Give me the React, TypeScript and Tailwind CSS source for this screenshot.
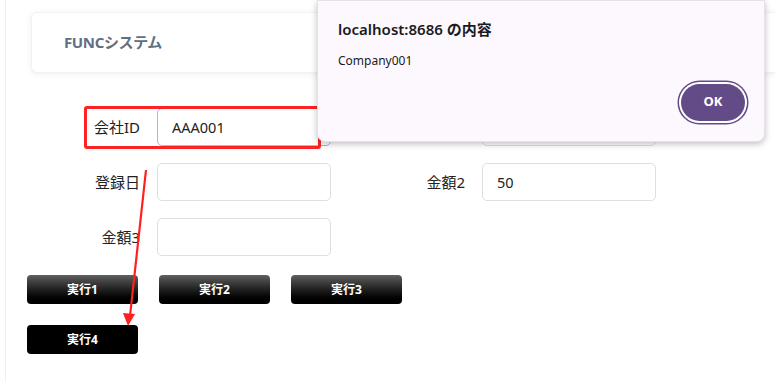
import { useState } from 'react';

const fields = [
    { label: '会社ID', value: 'AAA001', focus: true },
    { label: '金額1', value: '' },
    { label: '登録日', value: '' },
    { label: '金額2', value: '50' },
    { label: '金額3', value: '' },
];

export default function App() {

    const [values, setValues] = useState(fields.map((f) => f.value));

    return (
        <div className="relative w-[775px] h-[382px] overflow-hidden bg-white" style={{ fontFamily: '"Noto Sans", "Noto Sans CJK JP", sans-serif' }}>
            <div className="ml-[5px] h-full border-l border-[#f0f0f2] pl-[25px] pt-3">
                {/* header */}
                <div className="h-[61px] w-[760px] rounded-md bg-white shadow-[0_1px_6px_rgba(0,0,0,0.07)] border border-[#f1f2f4] flex items-center pl-8">
                    <span className="text-[15px] font-bold text-[#5f6f84] tracking-tight">FUNCシステム</span>
                </div>

                {/* form */}
                <div className="grid grid-cols-[311px_311px] gap-x-[14px] gap-y-[17px] mt-[35px] -ml-[11px]">
                    {fields.map((f, i) => (
                        <div key={i} className="flex items-center gap-[17px]">
                            <label className="w-[120px] text-right text-[15px] text-[#222]">{f.label}</label>
                            <input
                                className={`w-[174px] h-[38px] rounded-[5px] border bg-white px-[14px] text-[14.5px] text-[#222] outline-none ${f.focus ? 'border-[#a9b3f5]' : 'border-[#dcdfe4]'}`}
                                value={values[i]}
                                onChange={(e) => setValues(values.map((v, j) => (j === i ? e.target.value : v)))}
                            />
                        </div>
                    ))}
                </div>

                {/* buttons */}
                <div className="mt-[19px] -ml-[4px] flex flex-col gap-[21px]">
                    <div className="flex gap-[21px]">
                        {['実行1', '実行2', '実行3'].map((b) => (
                            <button key={b} className="w-[111px] h-[29px] rounded-[4px] bg-gradient-to-b from-[#606060] to-[#000] text-white text-[12px] font-bold">
                                {b}
                            </button>
                        ))}
                    </div>
                    <button className="w-[111px] h-[29px] rounded-[4px] bg-black text-white text-[12px] font-bold">実行4</button>
                </div>
            </div>

            {/* annotation */}
            <div className="absolute left-[84px] top-[106px] w-[237px] h-[43px] border-[3px] border-[#ff2222] rounded-[3px]" />
            <svg className="absolute left-0 top-0" width="775" height="382">
                <line x1="146" y1="170" x2="130" y2="316" stroke="#ff1f1f" strokeWidth="2.2" />
                <polygon points="128,326 123,313 135,314" fill="#ff1f1f" />
            </svg>

            {/* alert dialog */}
            <div className="absolute left-[317px] top-0 w-[448px] h-[142px] rounded-b-[8px] bg-[#fdf8fd] shadow-[0_2px_6px_rgba(0,0,0,0.25)] border border-[#e6e0e8]">
                <div className="pl-5 pt-[17px] text-[15px] font-semibold text-[#1b1b1f]">localhost:8686 の内容</div>
                <div className="pl-5 pt-[11px] text-[12px] text-[#1b1b1f]">Company001</div>
                <div className="flex justify-end pr-[19px] pt-[14px]">
                    <button className="w-[64px] h-[37px] rounded-full bg-[#634b87] text-white text-[13px] font-bold shadow-[0_0_0_2px_#fff,0_0_0_3.5px_#634b87]">OK</button>
                </div>
            </div>
        </div>
    );
}
